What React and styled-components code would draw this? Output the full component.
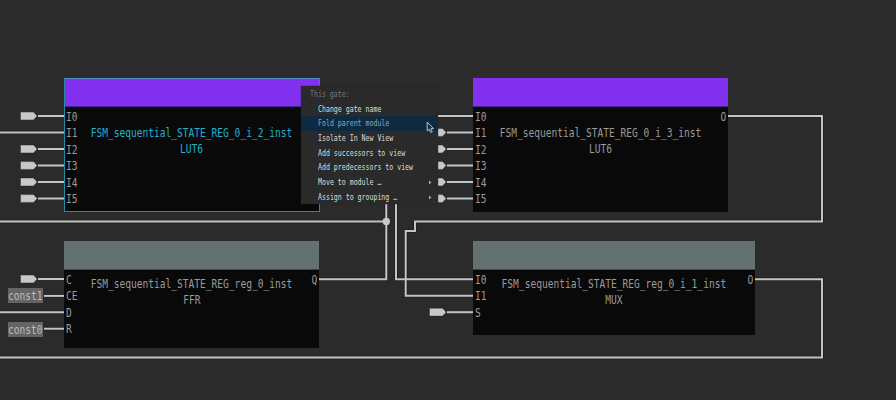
import React from "react";
import styled, { createGlobalStyle, css } from "styled-components";

const GlobalStyle = createGlobalStyle`
  body {
    margin: 0;
    background: #2b2b2b;
    overflow: hidden;
  }
`;

const Canvas = styled.main`
  position: relative;
  width: 896px;
  height: 400px;
  overflow: hidden;
  background: #2b2b2b;
  font-family: "DejaVu Sans Mono", monospace;
  font-size: 12px;
  color: #9b9b9b;
`;

const Wires = styled.svg`
  position: absolute;
  inset: 0;
  width: 896px;
  height: 400px;
`;

const Gate = styled.section`
  position: absolute;
  left: ${(p) => p.$x}px;
  top: ${(p) => p.$y}px;
  width: ${(p) => p.$w}px;
  height: ${(p) => p.$h}px;
  box-sizing: border-box;
  display: flex;
  flex-direction: column;
  background: #090909;
  ${(p) =>
    p.$selected &&
    css`
      border: 1px solid #238aa3;
      border-top-color: #4a8fc8;
    `}
`;

const Header = styled.header`
  flex: none;
  height: ${(p) => (p.$selected ? 28 : 29)}px;
  box-sizing: border-box;
  background: ${(p) => p.$color};
  border-bottom: 1px solid ${(p) => p.$edge};
`;

const Body = styled.div`
  flex: 1;
  display: grid;
  grid-template-columns: 24px minmax(0, 1fr) 24px;
  padding-top: 2px;
  margin: 0 ${(p) => (p.$selected ? -1 : 0)}px;
`;

const Pins = styled.div`
  display: flex;
  flex-direction: column;
  align-items: ${(p) => (p.$end ? "flex-end" : "flex-start")};
  padding: 0 2.2px;
  line-height: 16.5px;
`;

const Names = styled.div`
  display: flex;
  flex-direction: column;
  align-items: center;
  padding-top: ${(p) => p.$pad}px;
  line-height: 16px;
  color: ${(p) => (p.$selected ? "#22b0cf" : "inherit")};
`;

const Glyphs = styled.span`
  display: block;
  white-space: pre;
  transform: scaleX(0.797);
  transform-origin: ${(p) => p.$from || "center"};
`;

const Constant = styled.div`
  position: absolute;
  left: 8px;
  top: ${(p) => p.$y}px;
  width: 35px;
  height: 15px;
  line-height: 17px;
  background: #646464;
  color: #bcbcbc;
`;

const Menu = styled.nav`
  position: absolute;
  left: 301px;
  top: 86px;
  width: 137px;
  height: 118px;
  box-sizing: border-box;
  padding-top: 1px;
  background: #2a2a2a;
  box-shadow: 0 0 1px #1c1c1c;
  font-size: 8.25px;
  line-height: 14.7px;
  color: #dcdcdc;
`;

const MenuTitle = styled.div`
  height: 14.6px;
  padding-left: 9px;
  color: #777;
`;

const MenuItem = styled.div`
  display: flex;
  justify-content: space-between;
  align-items: center;
  height: 14.7px;
  padding: 0 6px 0 17px;
  background: ${(p) => (p.$active ? "#0e2a40" : "transparent")};
  color: ${(p) => (p.$active ? "#91a9b9" : "inherit")};
`;

const Chevron = styled.svg`
  width: 3px;
  height: 5px;
  fill: #aaa;
`;

const Cursor = styled.svg`
  position: absolute;
  left: 426px;
  top: 121px;
  width: 9px;
  height: 13px;
`;

const PURPLE = { color: "#8331f1", edge: "#4c2290" };
const SLATE = { color: "#637170", edge: "#3d4747" };
const LUT_PINS = ["I0", "I1", "I2", "I3", "I4", "I5"];

const gates = [
  { x: 64, y: 77.5, w: 255.5, h: 134.5, tone: PURPLE, selected: true, name: "FSM_sequential_STATE_REG_0_i_2_inst", type: "LUT6", pins: LUT_PINS, out: "", pad: 16 },
  { x: 472.5, y: 77.5, w: 255.5, h: 134.5, tone: PURPLE, name: "FSM_sequential_STATE_REG_0_i_3_inst", type: "LUT6", pins: LUT_PINS, out: "O", pad: 16 },
  { x: 64, y: 240.5, w: 255, h: 107.5, tone: SLATE, name: "FSM_sequential_STATE_REG_reg_0_inst", type: "FFR", pins: ["C", "CE", "D", "R"], out: "Q", pad: 4 },
  { x: 472.5, y: 240.5, w: 282.5, h: 94, tone: SLATE, name: "FSM_sequential_STATE_REG_reg_0_i_1_inst", type: "MUX", pins: ["I0", "I1", "S"], out: "O", pad: 4 },
];

const wires = [
  "M0 132.5H64",
  "M0 221.5H386.3",
  "M386.3 200V279.2H319",
  "M396 200V279.2H473",
  "M473 295.7H405.7V231H415V221.5H822V116H728",
  "M755 279.2H822V357.5H0",
  "M0 312.3H64",
  "M436 116H473",
  "M44 295.9H64",
  "M44 328.7H64",
];

const inputs = [
  ...[116, 149, 165.5, 182, 198.5, 279].map((y) => [20.5, y]),
  ...[132.5, 149, 165.5, 182, 198.5].map((y) => [429.5, y]),
  [429.5, 312.2],
];

const items = [
  ["Change gate name"],
  ["Fold parent module"],
  ["Isolate In New View"],
  ["Add successors to view"],
  ["Add predecessors to view"],
  ["Move to module …", true],
  ["Assign to grouping …", true],
];

function GateNode({ gate }) {
  const { selected, tone } = gate;
  return (
    <Gate $x={gate.x} $y={gate.y} $w={gate.w} $h={gate.h} $selected={selected}>
      <Header $color={tone.color} $edge={tone.edge} $selected={selected} />
      <Body $selected={selected}>
        <Pins>
          {gate.pins.map((pin) => (
            <Glyphs key={pin} $from="left">{pin}</Glyphs>
          ))}
        </Pins>
        <Names $pad={gate.pad} $selected={selected}>
          <Glyphs>{gate.name}</Glyphs>
          <Glyphs>{gate.type}</Glyphs>
        </Names>
        <Pins $end>
          <Glyphs $from="right">{gate.out}</Glyphs>
        </Pins>
      </Body>
    </Gate>
  );
}

export default function App() {
  return (
    <>
      <GlobalStyle />
      <Canvas>
        <Wires viewBox="0 0 896 400">
          <g fill="none" stroke="#202020" strokeWidth="3.6">
            {wires.map((d) => <path key={d} d={d} />)}
          </g>
          <g fill="none" stroke="#c4c4c4" strokeWidth="2">
            {wires.map((d) => <path key={d} d={d} />)}
          </g>
          <circle cx="386.3" cy="221.5" r="3.7" fill="#c8c8c8" />
          {inputs.map(([x, y]) => (
            <g key={`${x}-${y}`} transform={`translate(${x} ${y})`}>
              <path d="M0-3.9H13L16.7 0L13 3.9H0Z" fill="#c8c8c8" stroke="#202020" strokeWidth=".4" />
              <path d="M17.5 0H43.5" stroke="#c4c4c4" strokeWidth="2" />
            </g>
          ))}
        </Wires>
        {gates.map((gate) => <GateNode key={gate.name} gate={gate} />)}
        <Constant $y={288.3}><Glyphs $from="left">const1</Glyphs></Constant>
        <Constant $y={321.7}><Glyphs $from="left">const0</Glyphs></Constant>
        <Menu>
          <MenuTitle><Glyphs $from="left">This gate:</Glyphs></MenuTitle>
          {items.map(([label, submenu], i) => (
            <MenuItem key={label} $active={i === 1}>
              <Glyphs $from="left">{label}</Glyphs>
              {submenu && <Chevron viewBox="0 0 3 5"><path d="M0 .5L2.5 2.5L0 4.5Z" /></Chevron>}
            </MenuItem>
          ))}
        </Menu>
        <Cursor viewBox="0 0 9 13">
          <path d="M1.2 1V10L3.3 8.2L4.7 11.4L6.2 10.7L4.9 7.7H7.6Z" fill="#202b33" stroke="#c8ced2" strokeWidth=".9" />
        </Cursor>
      </Canvas>
    </>
  );
}
